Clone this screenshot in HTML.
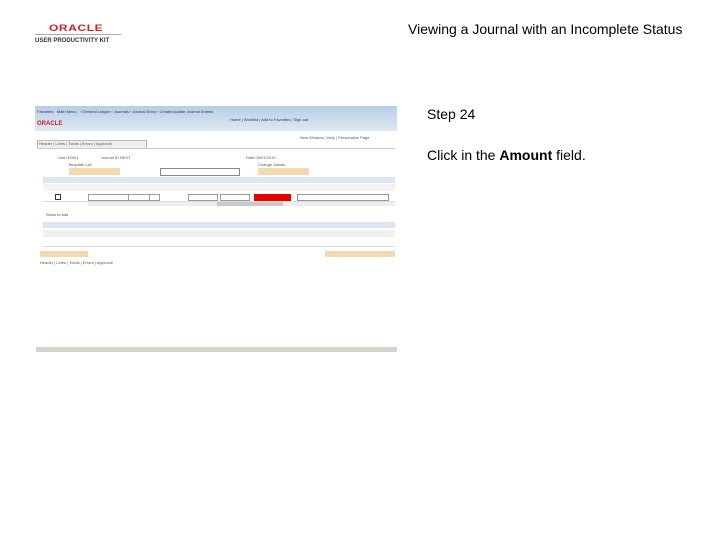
<!DOCTYPE html>
<html><head><style>
body{margin:0;width:720px;height:540px;background:#fff;font-family:"Liberation Sans",sans-serif;position:relative;overflow:hidden}
.a{position:absolute}
.t{font-size:4px;color:#555;white-space:nowrap}
</style></head><body>
<div class="a" style="left:49px;top:21px;font-size:12px;font-weight:bold;color:#c22;letter-spacing:0.6px;transform:scaleY(0.8)">ORACLE</div>
<div class="a" style="left:35px;top:34px;width:86px;height:1px;background:#aaa"></div>
<div class="a" style="left:35px;top:38px;font-size:6px;font-weight:bold;color:#333">USER PRODUCTIVITY KIT</div>
<div class="a" style="left:408px;top:21px;font-size:14px;color:#000">Viewing a Journal with an Incomplete Status</div>
<div class="a" style="left:427px;top:106px;font-size:14px;color:#000">Step 24</div>
<div class="a" style="left:427px;top:147px;font-size:14px;color:#000">Click in the <b>Amount</b> field.</div>

<div class="a" style="left:35px;top:106px;width:362px;height:25px;background:linear-gradient(#b7cde6,#dfe8f3)"></div>
<div class="a t" style="left:37px;top:109px;color:#335">Favorites &nbsp; Main Menu &nbsp; › General Ledger › Journals › Journal Entry › Create/Update Journal Entries</div>
<div class="a t" style="left:230px;top:117px;color:#335">Home | Worklist | Add to Favorites | Sign out</div>
<div class="a" style="left:37px;top:121px;font-size:6px;font-weight:bold;color:#c22">ORACLE</div>
<div class="a t" style="left:300px;top:135px">New Window | Help | Personalize Page</div>
<div class="a" style="left:37px;top:140px;width:108px;height:7px;border:1px solid #bbb;background:#eee"></div>
<div class="a t" style="left:39px;top:141px">Header | Lines | Totals | Errors | Approval</div>
<div class="a" style="left:37px;top:148px;width:358px;height:1px;background:#ccc"></div>
<div class="a t" style="left:58px;top:155px">Unit US001 &nbsp;&nbsp;&nbsp;&nbsp;&nbsp;&nbsp;&nbsp;&nbsp;&nbsp;&nbsp;&nbsp;&nbsp;&nbsp;&nbsp;&nbsp;&nbsp;&nbsp;&nbsp; Journal ID NEXT</div>
<div class="a t" style="left:246px;top:155px">Date 05/01/2010</div>
<div class="a t" style="left:68px;top:162px">Template List</div>
<div class="a t" style="left:258px;top:162px">Change Values</div>
<div class="a" style="left:69px;top:168px;width:51px;height:7px;background:#f1d9b0"></div>
<div class="a" style="left:258px;top:168px;width:51px;height:7px;background:#f1d9b0"></div>
<div class="a" style="left:160px;top:168px;width:78px;height:6px;border:1px solid #888;background:#fff"></div>
<div class="a" style="left:43px;top:177px;width:352px;height:6px;background:#dbe6f2"></div>
<div class="a" style="left:43px;top:184px;width:352px;height:7px;background:#f3f3f3"></div>
<div class="a" style="left:43px;top:192px;width:352px;height:9px;background:#fff;border-bottom:1px solid #ddd"></div>
<div class="a" style="left:55px;top:194px;width:4px;height:4px;border:1px solid #333"></div>
<div class="a" style="left:88px;top:194px;width:60px;height:5px;border:1px solid #999"></div>
<div class="a" style="left:128px;top:194px;width:30px;height:5px;border:1px solid #999"></div>
<div class="a" style="left:188px;top:194px;width:28px;height:5px;border:1px solid #999"></div>
<div class="a" style="left:220px;top:194px;width:28px;height:5px;border:1px solid #999"></div>
<div class="a" style="left:254px;top:194px;width:37px;height:7px;background:#e80000"></div>
<div class="a" style="left:297px;top:194px;width:90px;height:5px;border:1px solid #999"></div>
<div class="a" style="left:88px;top:202px;width:307px;height:4px;background:#eee"></div>
<div class="a" style="left:217px;top:202px;width:66px;height:4px;background:#c8c8c8"></div>
<div class="a t" style="left:46px;top:212px">Rows to add</div>
<div class="a" style="left:43px;top:222px;width:352px;height:6px;background:#dbe6f2"></div>
<div class="a" style="left:43px;top:230px;width:352px;height:7px;background:#f0f0f0"></div>
<div class="a" style="left:43px;top:239px;width:352px;height:7px;border-bottom:1px solid #ddd"></div>
<div class="a" style="left:40px;top:251px;width:48px;height:6px;background:#f1d9b0"></div>
<div class="a" style="left:325px;top:251px;width:70px;height:6px;background:#f1d9b0"></div>
<div class="a t" style="left:40px;top:260px">Header | Lines | Totals | Errors | Approval</div>
<div class="a" style="left:36px;top:347px;width:361px;height:5px;background:#d4d4cc"></div>
</body></html>
